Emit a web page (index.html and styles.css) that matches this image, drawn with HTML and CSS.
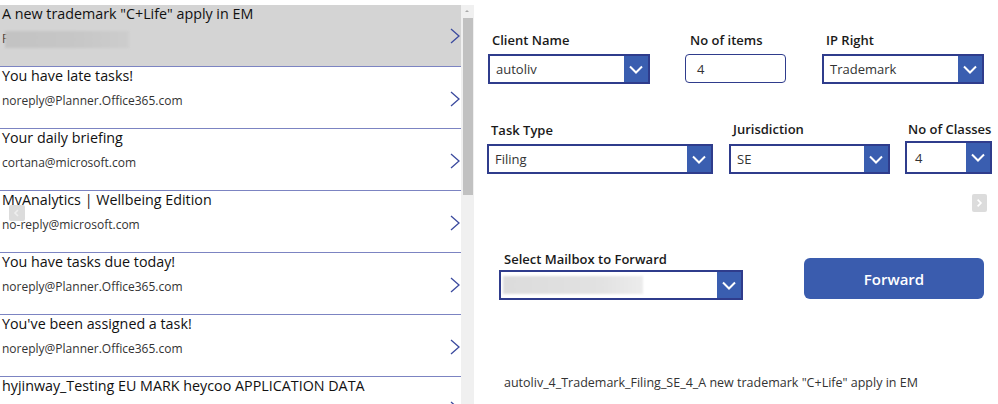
FILE: index.html
```html
<!DOCTYPE html>
<html>
<head>
<meta charset="utf-8">
<link rel="stylesheet" href="styles.css">
</head>
<body>
<div class="app">
  <div class="gallery">
    <div class="list">
      <div class="item selected">
        <div class="title">A new trademark "C+Life" apply in EM</div>
        <div class="sub"><span class="first">F</span><span class="blur"></span></div>
        <svg class="chev" width="10" height="16" viewBox="0 0 10 16"><polyline points="1,1 9,8 1,15" fill="none" stroke="#3b4a9e" stroke-width="1.3"/></svg>
      </div>
      <div class="item">
        <div class="title">You have late tasks!</div>
        <div class="sub">noreply@Planner.Office365.com</div>
        <svg class="chev" width="10" height="16" viewBox="0 0 10 16"><polyline points="1,1 9,8 1,15" fill="none" stroke="#3b4a9e" stroke-width="1.3"/></svg>
      </div>
      <div class="item">
        <div class="title">Your daily briefing</div>
        <div class="sub">cortana@microsoft.com</div>
        <svg class="chev" width="10" height="16" viewBox="0 0 10 16"><polyline points="1,1 9,8 1,15" fill="none" stroke="#3b4a9e" stroke-width="1.3"/></svg>
      </div>
      <div class="item">
        <div class="title">MyAnalytics | Wellbeing Edition</div>
        <div class="sub">no-reply@microsoft.com</div>
        <svg class="chev" width="10" height="16" viewBox="0 0 10 16"><polyline points="1,1 9,8 1,15" fill="none" stroke="#3b4a9e" stroke-width="1.3"/></svg>
        <span class="nav nav-left"><svg width="16" height="16" viewBox="0 0 16 16"><polyline points="9,5 6,8 9,11" fill="none" stroke="#eeeeee" stroke-width="1.6"/></svg></span>
      </div>
      <div class="item">
        <div class="title">You have tasks due today!</div>
        <div class="sub">noreply@Planner.Office365.com</div>
        <svg class="chev" width="10" height="16" viewBox="0 0 10 16"><polyline points="1,1 9,8 1,15" fill="none" stroke="#3b4a9e" stroke-width="1.3"/></svg>
      </div>
      <div class="item">
        <div class="title">You've been assigned a task!</div>
        <div class="sub">noreply@Planner.Office365.com</div>
        <svg class="chev" width="10" height="16" viewBox="0 0 10 16"><polyline points="1,1 9,8 1,15" fill="none" stroke="#3b4a9e" stroke-width="1.3"/></svg>
      </div>
      <div class="item">
        <div class="title">hyjinway_Testing EU MARK heycoo APPLICATION DATA</div>
        <div class="sub"></div>
        <svg class="chev" width="10" height="16" viewBox="0 0 10 16"><polyline points="1,1 9,8 1,15" fill="none" stroke="#3b4a9e" stroke-width="1.3"/></svg>
      </div>
    </div>
    <div class="scrollbar">
      <div class="up"></div>
      <div class="thumb"></div>
    </div>
  </div>

  <div class="form">
    <div class="row row1">
      <div class="field f-client">
        <div class="label">Client Name</div>
        <div class="dropdown"><span class="val">autoliv</span><span class="btn"><svg width="14" height="9" viewBox="0 0 14 9"><polyline points="1,1.5 7,7.5 13,1.5" fill="none" stroke="#fff" stroke-width="2"/></svg></span></div>
      </div>
      <div class="field f-items">
        <div class="label">No of items</div>
        <div class="input">4</div>
      </div>
      <div class="field f-ip">
        <div class="label">IP Right</div>
        <div class="dropdown"><span class="val">Trademark</span><span class="btn"><svg width="14" height="9" viewBox="0 0 14 9"><polyline points="1,1.5 7,7.5 13,1.5" fill="none" stroke="#fff" stroke-width="2"/></svg></span></div>
      </div>
    </div>

    <div class="row row2">
      <div class="field f-task">
        <div class="label">Task Type</div>
        <div class="dropdown"><span class="val">Filing</span><span class="btn"><svg width="14" height="9" viewBox="0 0 14 9"><polyline points="1,1.5 7,7.5 13,1.5" fill="none" stroke="#fff" stroke-width="2"/></svg></span></div>
      </div>
      <div class="field f-jur">
        <div class="label">Jurisdiction</div>
        <div class="dropdown"><span class="val">SE</span><span class="btn"><svg width="14" height="9" viewBox="0 0 14 9"><polyline points="1,1.5 7,7.5 13,1.5" fill="none" stroke="#fff" stroke-width="2"/></svg></span></div>
      </div>
      <div class="field f-classes">
        <div class="label">No of Classes</div>
        <div class="dropdown tall"><span class="val">4</span><span class="btn"><svg width="14" height="9" viewBox="0 0 14 9"><polyline points="1,1.5 7,7.5 13,1.5" fill="none" stroke="#fff" stroke-width="2"/></svg></span></div>
      </div>
    </div>

    <div class="navrow">
      <span class="nav nav-right"><svg width="16" height="18" viewBox="0 0 16 18"><polyline points="6,5.5 9.5,9 6,12.5" fill="none" stroke="#ffffff" stroke-width="1.8"/></svg></span>
    </div>

    <div class="row row3">
      <div class="field f-mail">
        <div class="label">Select Mailbox to Forward</div>
        <div class="dropdown"><span class="val"><span class="blur2"></span></span><span class="btn"><svg width="14" height="9" viewBox="0 0 14 9"><polyline points="1,1.5 7,7.5 13,1.5" fill="none" stroke="#fff" stroke-width="2"/></svg></span></div>
      </div>
      <button class="forward">Forward</button>
    </div>

    <div class="result">autoliv_4_Trademark_Filing_SE_4_A new trademark "C+Life" apply in EM</div>
  </div>
</div>
</body>
</html>
```

FILE: styles.css
```css
* { box-sizing: border-box; }
html, body { margin: 0; padding: 0; background: #fff; }
body {
  width: 998px;
  height: 404px;
  overflow: hidden;
  font-family: "Open Sans", "Noto Sans", sans-serif;
  color: #000;
}
.app { display: flex; height: 404px; overflow: hidden; }

/* gallery */
.gallery { display: flex; width: 475px; height: 404px; padding-top: 5px; overflow: hidden; }
.list { width: 461px; height: 399px; overflow: hidden; }
.item {
  position: relative;
  height: 62px;
  border-bottom: 1px solid #7c84c2;
  padding-left: 2px;
}
.item.selected { background: #d4d4d4; margin-top: -1px; height: 63px; padding-top: 1px; }
.title {
  font-size: 14.3px;
  line-height: 18px;
  color: #111;
  white-space: nowrap;
}
.sub {
  margin-top: 8px;
  font-size: 12px;
  line-height: 16px;
  color: #333;
  height: 16px;
  display: flex;
  align-items: center;
}
.first { display: inline-block; }
.blur {
  display: inline-block;
  width: 124px;
  height: 17px;
  margin-left: -3px;
  background: linear-gradient(90deg, #c3c3c3, #c7c7c7 60%, #cdcdcd);
  filter: blur(1px);
}
.chev { position: absolute; left: 450px; top: 24px; }
.nav {
  position: absolute;
  display: flex;
  align-items: center;
  justify-content: center;
  background: #dcdcdc;
  border-radius: 2px;
}
.nav-left { left: 9px; top: 14px; width: 16px; height: 16px; }

.scrollbar {
  width: 13px;
  background: #f0f0f0;
  position: relative;
  height: 399px;
}
.up {
  position: absolute;
  left: 4px; top: 5px;
  width: 0; height: 0;
  border-left: 2.5px solid transparent;
  border-right: 2.5px solid transparent;
  border-bottom: 2.5px solid #a8a8a8;
}
.thumb {
  position: absolute;
  left: 2px; top: 13px;
  width: 10px; height: 177px;
  background: #c1c1c1;
}

/* form */
.form { flex: 1; padding-top: 32px; position: relative; }
.row { display: flex; align-items: flex-end; }
.row1 { align-items: flex-start; }
.field { display: flex; flex-direction: column; }
.label {
  font-size: 13px;
  font-weight: 600;
  line-height: 16px;
  color: #1a1a1a;
  padding-left: 4px;
  margin-bottom: 6px;
  white-space: nowrap;
}
.dropdown {
  display: flex;
  height: 30px;
  border: 2px solid #2f3c8c;
  background: #fff;
}
.dropdown .val {
  flex: 1;
  font-size: 13px;
  color: #333;
  padding-left: 6px;
  display: flex;
  align-items: center;
}
.dropdown .btn {
  width: 24px;
  background: #3a5eb0;
  display: flex;
  align-items: center;
  justify-content: center;
}
.input {
  height: 29px;
  border: 1.5px solid #2f3c8c;
  border-radius: 4px;
  font-size: 13px;
  color: #333;
  padding-left: 11px;
  display: flex;
  align-items: center;
}
.f-client { margin-left: 13px; width: 162px; }
.f-items { margin-left: 35px; width: 101px; }
.f-items .label { padding-left: 5px; }
.f-ip { margin-left: 36px; width: 162px; }

.row2 { margin-top: 37px; }
.f-task { margin-left: 12px; width: 226px; }
.f-jur { margin-left: 16px; width: 161px; }
.f-jur .label { margin-bottom: 7px; }
.f-classes { margin-left: 15px; width: 87px; }
.f-classes .label { margin-bottom: 4px; padding-left: 3px; }
.dropdown.tall { height: 33px; }
.f-classes .dropdown .val { padding-left: 8px; }

.navrow { display: flex; justify-content: flex-end; padding-right: 11px; margin-top: 20px; height: 18px; }
.nav-right { position: static; width: 15px; height: 18px; }

.row3 { margin-top: 39px; align-items: flex-end; }
.f-mail { margin-left: 24px; width: 244px; }
.f-mail .label { padding-left: 5px; margin-bottom: 3px; }
.blur2 {
  display: inline-block;
  width: 140px;
  height: 18px;
  margin-left: -4px;
  background: linear-gradient(90deg, #dcdcdc, #e2e2e2 70%, #ececec);
  filter: blur(1px);
}
.forward {
  margin-left: 61px;
  margin-bottom: 1px;
  width: 180px;
  height: 41px;
  border: none;
  border-radius: 6px;
  background: #3a5cae;
  color: #fff;
  font-family: "Open Sans", "Noto Sans", sans-serif;
  font-size: 15px;
  font-weight: 600;
}
.result {
  margin-top: 75px;
  margin-left: 29px;
  font-size: 12.5px;
  line-height: 16px;
  color: #333;
  white-space: nowrap;
}
```
